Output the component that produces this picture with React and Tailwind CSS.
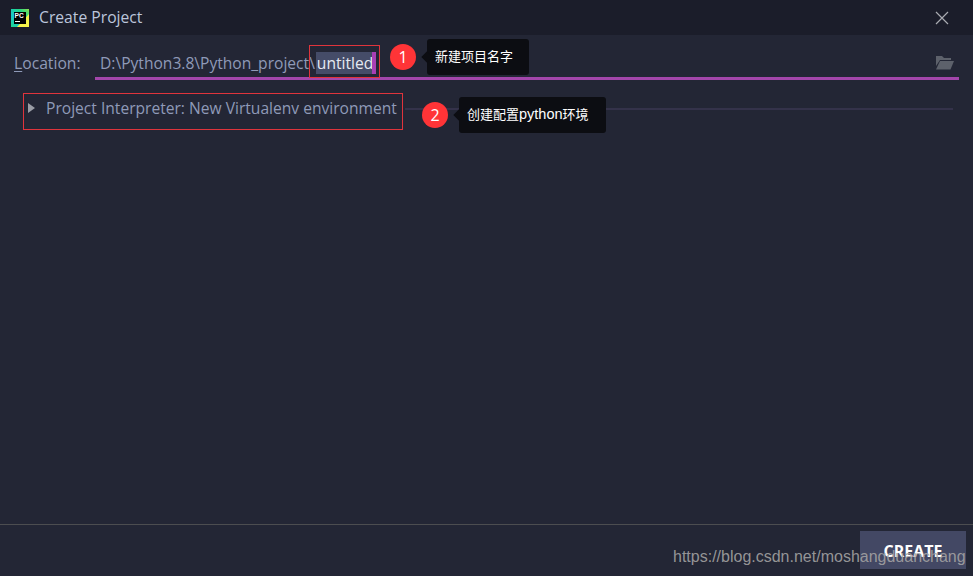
import React from "react";

function PcLogo() {
  return (
    <svg width="18" height="18" viewBox="0 0 18 18" className="shrink-0">
      <defs>
        <linearGradient id="pcEdge" x1="0" y1="1" x2="1" y2="0">
          <stop offset="0" stopColor="#1fd68c" />
          <stop offset="0.35" stopColor="#18c8c8" />
          <stop offset="0.7" stopColor="#21d789" />
          <stop offset="1" stopColor="#8fe04e" />
        </linearGradient>
      </defs>
      <rect width="18" height="18" fill="url(#pcEdge)" />
      <path d="M18 18H6L18 5z" fill="#f4f24a" />
      <rect x="3" y="3" width="12" height="12" fill="#000" />
      <text x="3.6" y="9.4" fill="#fff" fontSize="6.6" fontWeight="700" fontFamily="Liberation Sans">PC</text>
      <rect x="4" y="12" width="5" height="1" fill="#fff" />
    </svg>
  );
}

function FolderIcon() {
  return (
    <svg width="20" height="16" viewBox="0 0 20 16">
      <path d="M1 1h6l2 2h7v2H5L1 11z" fill="#5d616b" />
      <path d="M5 6h14l-3.5 8.5H1z" fill="#5d616b" />
    </svg>
  );
}

// numbered marker + dark tooltip used on the annotated screenshot
function Note({ n, children, className, boxClass }) {
  return (
    <div className={`absolute flex items-center ${className}`}>
      <span className="flex h-[26px] w-[26px] items-center justify-center rounded-full bg-[#ff3437] text-[16px] text-white">{n}</span>
      <div className={`relative ml-[11px] flex h-[36px] items-center rounded-[3px] bg-[#0c0d12] font-['Liberation_Sans','Noto_Sans_CJK_SC',sans-serif] text-[13px] text-white ${boxClass}`}>
        <span className="absolute left-[-4px] top-[14px] h-2 w-2 rotate-45 bg-[#0c0d12]" />
        <span>{children}</span>
      </div>
    </div>
  );
}

export default function App() {
  return (
    <div className="relative flex h-[576px] w-[973px] flex-col overflow-hidden bg-[#232635] font-['Open_Sans','Noto_Sans_CJK_SC',sans-serif]">
      <div className="flex h-[35px] shrink-0 items-center bg-[#1b1d2a] pl-[11px] pr-[24px]">
        <PcLogo />
        <span className="ml-[10px] pt-[1px] text-[15.7px] text-[#bcc6dc]">Create Project</span>
        <svg width="14" height="14" viewBox="0 0 14 14" className="ml-auto" stroke="#a9abb1" strokeWidth="1.2">
          <path d="M1 1l12 12M13 1L1 13" />
        </svg>
      </div>

      <div className="flex-1 pl-[14px] pr-[14px]">
        <div className="mt-[9px] flex h-[36px] items-start">
          <span className="mt-[9px] w-[81px] text-[15.7px] leading-[20px] text-[#8f9ab8]">
            <span className="underline underline-offset-2">L</span>ocation:
          </span>
          <div className="flex h-[36px] w-[864px] items-start justify-between border-b-[3px] border-[#a346ab] pl-[5px] pr-[4px]">
            <div className="mt-[9px] flex h-[20px] items-center text-[15.6px] leading-[20px] text-[#8f9ab8]">
              <span>D:\Python3.8\Python_project\</span>
              <span className="relative ml-[1px] flex h-[22px] w-[60px] items-center bg-[#454c68] pl-[1px] text-[#e6e9f2]">
                untitled
                <span className="absolute right-0 top-0 h-[22px] w-[4px] bg-[#a83fb5]" />
              </span>
            </div>
            <div className="mt-[11px]">
              <FolderIcon />
            </div>
          </div>
        </div>

        <div className="mt-[13px] flex items-start pl-[9px]">
          <div className="flex h-[37px] w-[380px] shrink-0 items-start border border-[#e0343c] pl-[4px] pt-[4px]">
            <span className="mt-[5px] h-0 w-0 border-y-[5px] border-l-[7px] border-y-transparent border-l-[#9a9da6]" />
            <span className="ml-[11px] whitespace-nowrap text-[15.6px] leading-[21px] text-[#8f9ab8]">Project Interpreter: New Virtualenv environment</span>
          </div>
          <div className="ml-[2px] mt-[15px] h-[2px] w-[548px] bg-[#34324a]" />
        </div>
      </div>

      <div className="flex h-[52px] shrink-0 justify-end border-t border-[#4c4d50] pr-[7px] pt-[6px]">
        <button className="flex h-[38px] w-[106px] items-center justify-center bg-[#434864] pt-[2px] text-[16px] font-bold text-white">CREATE</button>
      </div>

      {/* annotations on top of the dialog */}
      <div className="absolute left-[309px] top-[45px] h-[33px] w-[71px] border border-[#e0343c]" />
      <Note n="1" className="left-[390px] top-[39px]" boxClass="w-[102px] pl-[8px]">新建项目名字</Note>
      <Note n="2" className="left-[422px] top-[97px]" boxClass="w-[147px] pl-[8px]">
        创建配置<span className="text-[14.5px]">python</span>环境
      </Note>
      <span className="absolute left-[673px] top-[547px] font-['Liberation_Sans',sans-serif] text-[16px] leading-[20px] text-[#a3a3a3]/90">
        https://blog.csdn.net/moshangduanchang
      </span>
    </div>
  );
}
